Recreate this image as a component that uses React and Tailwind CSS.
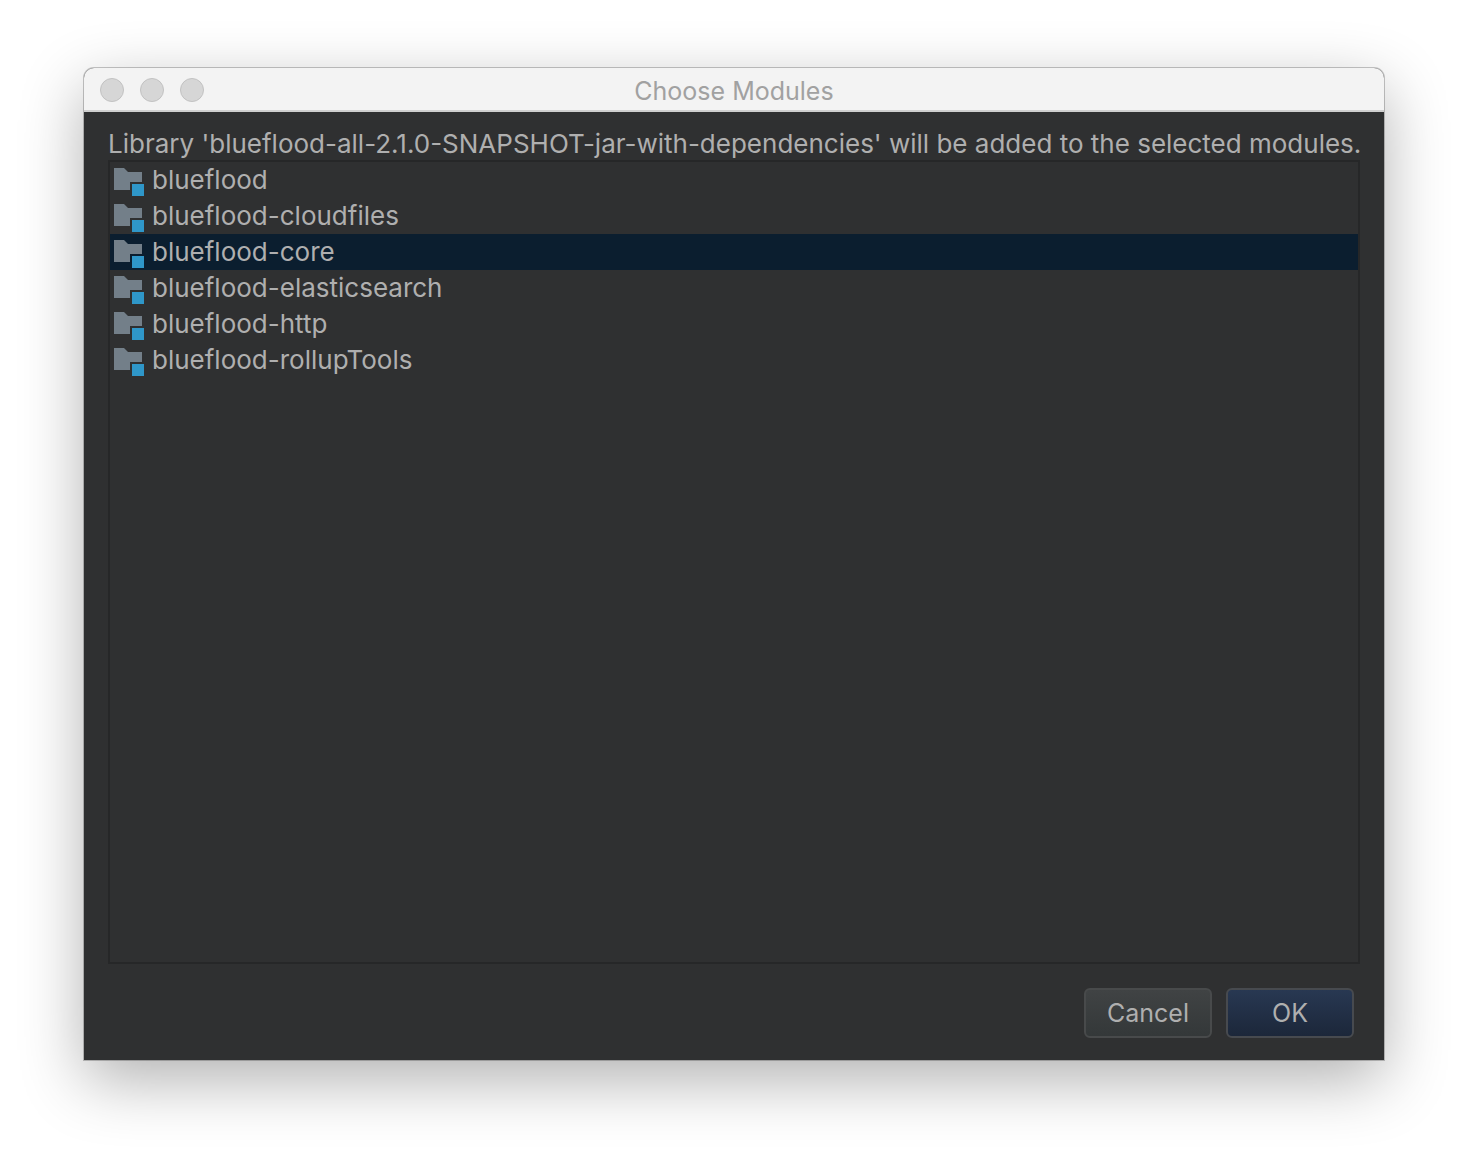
import { useState } from "react";

const modules = [
  "blueflood",
  "blueflood-cloudfiles",
  "blueflood-core",
  "blueflood-elasticsearch",
  "blueflood-http",
  "blueflood-rollupTools",
];

function ModuleIcon() {
  return (
    <svg width="30" height="32" viewBox="0 -4 30 32" className="shrink-0" aria-hidden="true">
      <path d="M0 0H10L14 4H28V14H16V22H0Z" fill="#737f89" />
      <path d="M18 16H30V28H18Z" fill="#2f97c9" />
    </svg>
  );
}

function WindowButton({ label }) {
  return (
    <button
      type="button"
      aria-label={label}
      className="size-6 rounded-full border border-[#c2c2c2] bg-[#d6d6d6]"
    />
  );
}

export default function App() {
  const [selected, setSelected] = useState("blueflood-core");

  return (
    <main className="flex min-h-screen flex-col bg-white px-[84px] pt-[68px] pb-[100px] font-['Inter',sans-serif] text-[26px] leading-9 text-[#afafaf]">
      <section
        aria-labelledby="dialog-title"
        className="flex flex-1 flex-col rounded-t-[10px] bg-[#2f3031] shadow-[0_0_0_1px_rgba(0,0,0,0.22),0_20px_64px_rgba(0,0,0,0.31)]"
      >
        <header className="grid h-11 grid-cols-[1fr_auto_1fr] items-center rounded-t-[10px] border-b-2 border-[#cfcfcf] bg-[#f3f3f3] px-4">
          <div className="flex gap-4 pt-0.5">
            <WindowButton label="Close" />
            <WindowButton label="Minimize" />
            <WindowButton label="Zoom" />
          </div>
          <h1 id="dialog-title" className="pt-1 text-[25px] text-[#a1a1a1]">
            Choose Modules
          </h1>
        </header>
        <div className="flex flex-1 flex-col px-6 pt-3.5 pb-[22px]">
          <p id="message" className="h-[34px] whitespace-nowrap">
            Library 'blueflood-all-2.1.0-SNAPSHOT-jar-with-dependencies' will be added to the selected modules.
          </p>
          <ul role="listbox" aria-labelledby="message" className="flex-1 border-2 border-[#262728]">
            {modules.map((name) => (
              <li
                key={name}
                role="option"
                aria-selected={name === selected}
                onClick={() => setSelected(name)}
                className="flex h-9 cursor-default items-center gap-2 px-1 aria-selected:bg-[#0b1e2f]"
              >
                <ModuleIcon />
                <span>{name}</span>
              </li>
            ))}
          </ul>
          <footer className="flex justify-end gap-3.5 pt-6 pr-1.5 text-[25px]">
            <button
              type="button"
              className="h-[50px] w-32 rounded-md border-2 border-[#484a4b] bg-linear-to-b from-[#404344] to-[#343839]"
            >
              Cancel
            </button>
            <button
              type="button"
              className="h-[50px] w-32 rounded-md border-2 border-[#474a4f] bg-linear-to-b from-[#283852] to-[#1c273a]"
            >
              OK
            </button>
          </footer>
        </div>
      </section>
    </main>
  );
}
